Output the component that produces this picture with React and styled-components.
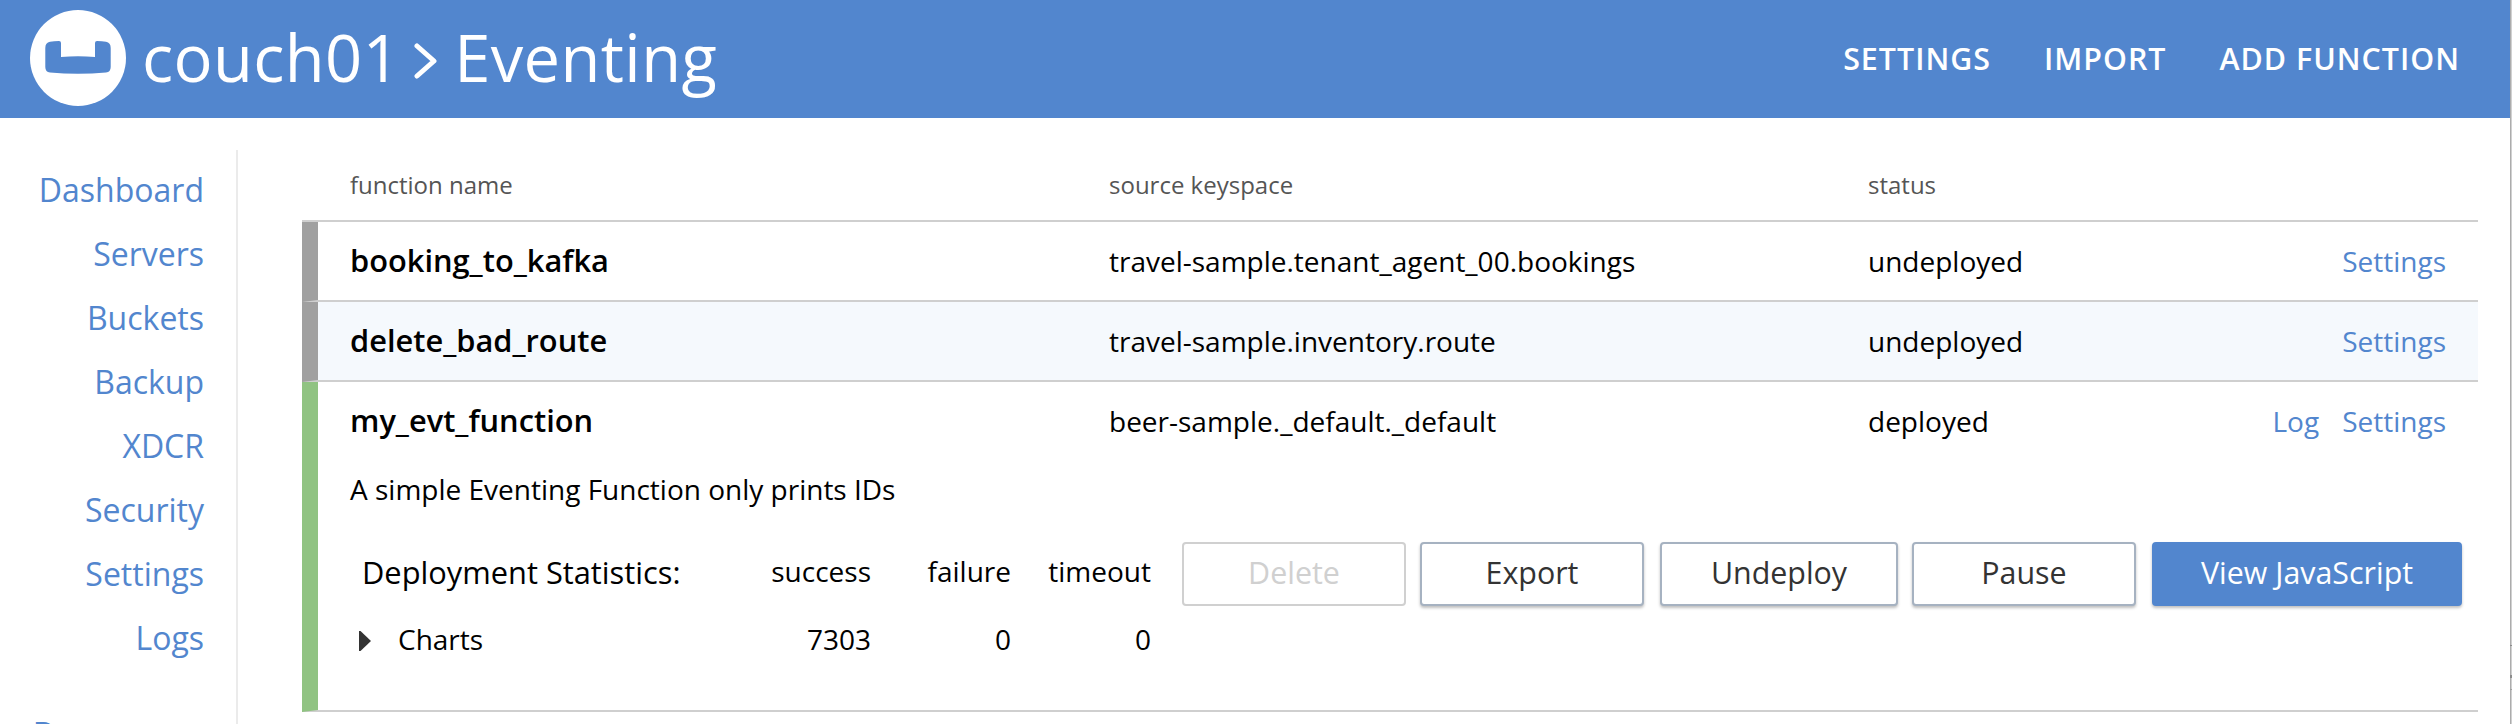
import React from 'react';
import styled, { createGlobalStyle } from 'styled-components';

const Global = createGlobalStyle`
  * { box-sizing: border-box; }
  body { margin: 0; background: #fff; font-family: "Open Sans", "Noto Sans", sans-serif; color: #000; overflow: hidden; }
  a { color: #5286ce; text-decoration: none; }
`;

const Screen = styled.div`
  display: flex;
  height: 724px;
  overflow: hidden;
`;

const Page = styled.div`
  flex: 1;
  min-width: 0;
  display: flex;
  flex-direction: column;
`;

const WindowEdge = styled.div`
  width: 2px;
  background:
    linear-gradient(#8c8c8c, #8c8c8c) 0 645px / 2px 1px no-repeat,
    linear-gradient(#8c8c8c, #8c8c8c) 0 675px / 2px 3px no-repeat,
    linear-gradient(#a0a0a0, #a0a0a0) 0 689px / 2px 1px no-repeat,
    linear-gradient(90deg, #acacac 50%, #d0d0d0 50%);
`;

const Header = styled.header`
  height: 118px;
  flex: none;
  display: flex;
  align-items: center;
  justify-content: space-between;
  padding: 0 50px 0 30px;
  background: #5286ce;
  color: #fff;
`;

const Brand = styled.div`
  display: flex;
  align-items: center;
  font-size: 65px;
  letter-spacing: 0.4px;
  line-height: 114px;
  height: 116px;
  align-self: flex-start;
`;

const BrandText = styled.span`
  padding-bottom: 2px;
`;

const Logo = styled.svg`
  width: 96px;
  height: 96px;
  margin-right: 16px;
`;

const Chevron = styled.svg`
  width: 23px;
  height: 36px;
  margin: 6px 17px 0 14px;
`;

const Actions = styled.nav`
  display: flex;
  gap: 53px;
`;

const Action = styled.a`
  && { color: #fff; }
  font-size: 30.4px;
  font-weight: 600;
  letter-spacing: 1px;
  line-height: 40px;
  text-transform: uppercase;
`;

const Body = styled.div`
  flex: 1;
  display: flex;
  padding-top: 32px;
  min-height: 0;
`;

const Sidebar = styled.nav`
  width: 238px;
  flex: none;
  border-right: 2px solid #ebebeb;
  padding: 8px 32px 0 0;
  display: flex;
  flex-direction: column;
  align-items: flex-end;
`;

const SideLink = styled.a`
  font-size: 32px;
  line-height: 64px;
  height: 64px;
  margin-top: ${(p) => (p.$newGroup ? 32 : 0)}px;
  flex: none;
`;

const Main = styled.main`
  flex: 1;
  padding: 0 32px 0 64px;
`;

const Columns = styled.div`
  display: grid;
  grid-template-columns: 759px 759px 1fr auto;
  align-items: center;
`;

const TableHead = styled(Columns)`
  height: 72px;
  padding: 0 0 1px 48px;
  border-bottom: 2px solid #cfcfcf;
  font-size: 24px;
  color: #555;
`;

const Item = styled.section`
  border-left: 16px solid ${(p) => (p.$deployed ? '#90c382' : '#a0a0a0')};
  border-bottom: 2px solid #cfcfcf;
  background: ${(p) => (p.$shaded ? '#f5f9fd' : '#fff')};
  padding-left: 32px;
`;

const Row = styled(Columns)`
  height: 78px;
  padding-right: 32px;
  font-size: 28px;
`;

const Name = styled.h2`
  margin: 0;
  padding-bottom: 2px;
  font-size: 30.8px;
  font-weight: 600;
`;

const RowLinks = styled.div`
  display: flex;
  gap: 23px;
`;

const Description = styled.p`
  margin: 0;
  height: 60px;
  line-height: 58px;
  font-size: 28px;
`;

const Details = styled.div`
  display: flex;
  justify-content: space-between;
  padding: 22px 16px 0 12px;
  height: 190px;
`;

const Stats = styled.div`
  display: grid;
  grid-template-columns: 370px 139px 140px 140px;
  grid-template-rows: 58px 78px;
  align-items: center;
  height: 136px;
  font-size: 28px;
`;

const StatsTitle = styled.div`
  padding-top: 2px;
  font-size: 30.8px;
`;

const Value = styled.div`
  text-align: right;
`;

const ChartsToggle = styled.div`
  display: flex;
  align-items: center;
  gap: 27px;
  margin-left: -3px;
`;

const Caret = styled.svg`
  width: 12px;
  height: 20px;
  margin-top: 4px;
`;

const Buttons = styled.div`
  display: flex;
  gap: 14px;
  height: 64px;
`;

const Button = styled.button`
  width: ${(p) => p.$width}px;
  height: 64px;
  margin: 0;
  padding: 0 0 2px;
  border: 2px solid #a6b2c1;
  border-radius: 4px;
  background: #fff;
  color: #333;
  font: 30.4px/58px "Open Sans", "Noto Sans", sans-serif;
  box-shadow: 0 2px 3px rgba(0, 0, 0, 0.25);

  ${(p) => p.$primary && 'background: #5286ce; border-color: #5286ce; color: #fff;'}
  &:disabled { border-color: #d0d0d0; color: #d0d0d0; box-shadow: none; }
  &:nth-child(2n + 3) { margin-left: 2px; }
`;

const sideLinks = ['Dashboard', 'Servers', 'Buckets', 'Backup', 'XDCR', 'Security', 'Settings', 'Logs'];

const functions = [
  { name: 'booking_to_kafka', source: 'travel-sample.tenant_agent_00.bookings', status: 'undeployed' },
  { name: 'delete_bad_route', source: 'travel-sample.inventory.route', status: 'undeployed' },
  { name: 'my_evt_function', source: 'beer-sample._default._default', status: 'deployed' },
];

function FunctionDetails() {
  return (
    <>
      <Description>A simple Eventing Function only prints IDs</Description>
      <Details>
        <Stats>
          <StatsTitle>Deployment Statistics:</StatsTitle>
          <Value>success</Value>
          <Value>failure</Value>
          <Value>timeout</Value>
          <ChartsToggle>
            <Caret viewBox="0 0 12 20"><path d="M0 0h1.5L12 10 1.5 20H0z" fill="#333" /></Caret>
            <span>Charts</span>
          </ChartsToggle>
          <Value>7303</Value>
          <Value>0</Value>
          <Value>0</Value>
        </Stats>
        <Buttons>
          <Button $width={224} disabled>Delete</Button>
          <Button $width={224}>Export</Button>
          <Button $width={238}>Undeploy</Button>
          <Button $width={224}>Pause</Button>
          <Button $width={310} $primary>View JavaScript</Button>
        </Buttons>
      </Details>
    </>
  );
}

export default function App() {
  return (
    <Screen>
      <Global />
      <Page>
        <Header>
          <Brand>
            <Logo viewBox="0 0 96 96">
              <circle cx="48" cy="48" r="48" fill="#fff" />
              <path
                d="M15.3 38Q15.3 32.500 20 31.800 24 31 29 31 31 31 31 33V47Q48 45.400 65 47V33Q65 31 67 31 72 31 76 31.800 80.700 32.500 80.700 38V57Q80.700 62 76 62.500 48 65 20 62.500 15.300 62 15.300 57Z"
                fill="#5286ce"
              />
            </Logo>
            <BrandText>couch01</BrandText>
            <Chevron viewBox="0 0 23 36">
              <path d="M3 3l17 15L3 33" fill="none" stroke="#fff" strokeWidth="5" strokeLinecap="round" strokeLinejoin="round" />
            </Chevron>
            <BrandText>Eventing</BrandText>
          </Brand>
          <Actions>
            <Action>Settings</Action>
            <Action>Import</Action>
            <Action>Add Function</Action>
          </Actions>
        </Header>
        <Body>
          <Sidebar>
            {sideLinks.map((s) => <SideLink key={s}>{s}</SideLink>)}
            <SideLink $newGroup>Documents</SideLink>
          </Sidebar>
          <Main>
            <TableHead>
              <span>function name</span>
              <span>source keyspace</span>
              <span>status</span>
            </TableHead>
            {functions.map((f, i) => (
              <Item key={f.name} $deployed={f.status === 'deployed'} $shaded={i % 2 === 1}>
                <Row>
                  <Name>{f.name}</Name>
                  <span>{f.source}</span>
                  <span>{f.status}</span>
                  <RowLinks>
                    {f.status === 'deployed' && <a>Log</a>}
                    <a>Settings</a>
                  </RowLinks>
                </Row>
                {f.status === 'deployed' && <FunctionDetails />}
              </Item>
            ))}
          </Main>
        </Body>
      </Page>
      <WindowEdge />
    </Screen>
  );
}
